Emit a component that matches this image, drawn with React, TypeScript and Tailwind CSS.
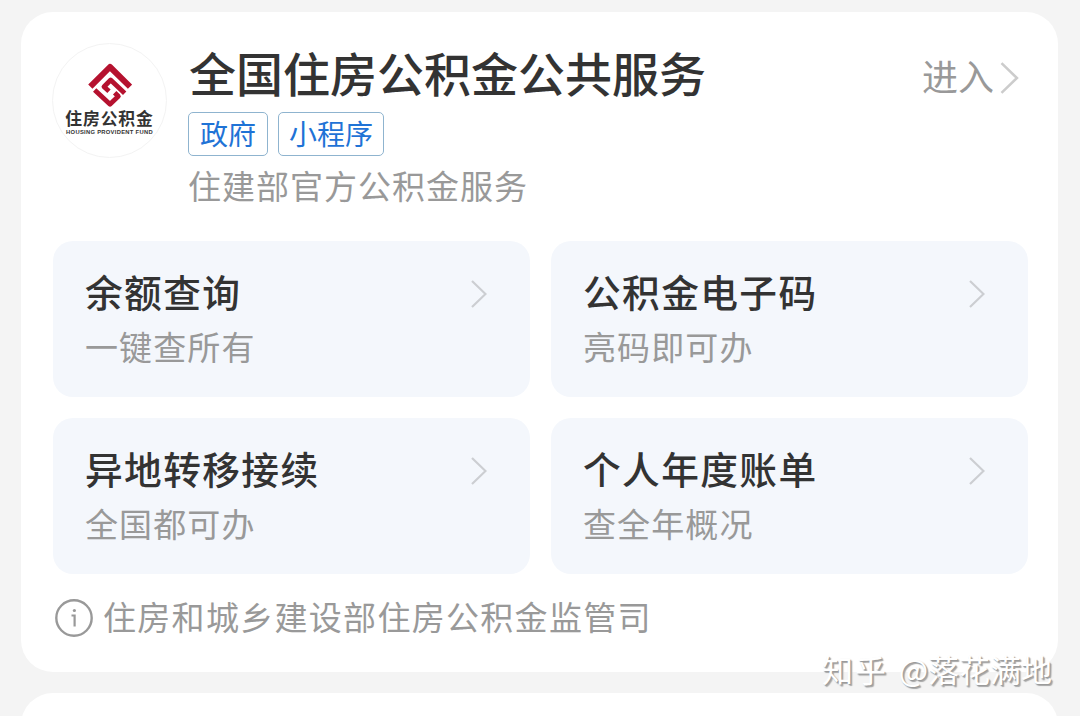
type Service = {
  title: string;
  desc: string;
};

const services: Service[] = [
  { title: "余额查询", desc: "一键查所有" },
  { title: "公积金电子码", desc: "亮码即可办" },
  { title: "异地转移接续", desc: "全国都可办" },
  { title: "个人年度账单", desc: "查全年概况" },
];

function Chevron({ className }: { className: string }) {
  return (
    <svg
      viewBox="0 0 16 28"
      fill="none"
      stroke="currentColor"
      className={className}
    >
      <path d="M1 1 L14.5 14 L1 27" strokeWidth="2.2" />
    </svg>
  );
}

function Logo() {
  return (
    <div className="-ml-px flex h-[115px] w-[115px] shrink-0 flex-col items-center rounded-full border border-[#f3f3f3] bg-white pt-[18px]">
      <svg
        viewBox="142 96 132 138"
        className="h-[46px] w-11"
        fill="none"
        stroke="#b5122f"
        strokeWidth="14.5"
        strokeLinejoin="round"
      >
        <path d="M149 170 L208 111 L268 170" strokeWidth="18" />
        <path d="M252 190 L210 150 L190 170 L205 184" />
        <path d="M162 180 L208 223 L233 199 L222 188" />
      </svg>
      <span className="mt-0.5 text-[16.8px] leading-[17px] font-bold tracking-[0.9px] whitespace-nowrap text-[#333]">
        住房公积金
      </span>
      <span className="mt-px font-['Liberation_Sans',sans-serif] text-[5.8px] leading-[9px] font-bold tracking-[0.3px] whitespace-nowrap text-[#333]">
        HOUSING PROVIDENT FUND
      </span>
    </div>
  );
}

function Tag({ label }: { label: string }) {
  return (
    <span className="flex h-11 min-w-20 items-center justify-center rounded-[5px] border border-[#8fb4cf] px-[10px] pb-0.5 text-[28px] leading-none text-[#1f73d6]">
      {label}
    </span>
  );
}

function ServiceTile({ title, desc }: Service) {
  return (
    <div className="flex h-[156px] items-start justify-between rounded-[20px] bg-[#f4f7fc] pt-[26px] pr-[43px] pl-8">
      <div>
        <h3 className="text-[37.7px] leading-[48px] font-medium tracking-[1.4px] text-[#333]">
          {title}
        </h3>
        <p className="mt-[9px] text-[33px] leading-[44px] tracking-[1.1px] text-[#999]">
          {desc}
        </p>
      </div>
      <Chevron className="mt-[13px] h-7 w-4 text-[#ccced2]" />
    </div>
  );
}

export default function App() {
  return (
    <div className="relative h-[716px] w-[1080px] overflow-hidden bg-[#f4f4f4] pt-3 pr-[22px] pl-[21px] font-['Noto_Sans_CJK_SC',sans-serif]">
      <section className="h-[660px] rounded-[32px] bg-white pt-[31px] pr-[30px] pl-8">
        <header className="flex h-[198px] items-start">
          <Logo />
          <div className="ml-[21px] flex-1">
            <h1 className="-mt-[3px] ml-px text-[47px] leading-[64px] font-medium text-[#333]">
              全国住房公积金公共服务
            </h1>
            <div className="mt-2 flex gap-[10px]">
              <Tag label="政府" />
              <Tag label="小程序" />
            </div>
            <p className="mt-[7px] text-[33px] leading-[44px] tracking-[1px] text-[#999]">
              住建部官方公积金服务
            </p>
          </div>
          <div className="mt-[13px] mr-[9px] flex items-center gap-[6px]">
            <span className="-mt-[5px] text-[36px] leading-[48px] text-[#999]">
              进入
            </span>
            <Chevron className="h-8 w-[19px] text-[#ccc]" />
          </div>
        </header>

        <div className="grid grid-cols-2 gap-x-[21px] gap-y-[21px]">
          {services.map((service) => (
            <ServiceTile key={service.title} {...service} />
          ))}
        </div>

        <footer className="mt-6 ml-[2px] flex items-center text-[#999]">
          <svg
            viewBox="0 0 38 38"
            className="h-[38px] w-[38px]"
            fill="none"
            stroke="currentColor"
          >
            <circle cx="19" cy="19" r="17.7" strokeWidth="2.4" />
            <path d="M16.5 16.5 H19.6 V27.5" strokeWidth="2.2" />
            <circle cx="19.4" cy="11.5" r="1.6" fill="currentColor" stroke="none" />
          </svg>
          <span className="-mt-1 ml-[10px] text-[33px] leading-[44px] tracking-[1.3px]">
            住房和城乡建设部住房公积金监管司
          </span>
        </footer>
      </section>

      {/* next card peeks in from below */}
      <section className="mt-[21px] h-20 rounded-[32px] bg-white" />

      <span className="absolute right-[28px] bottom-[25px] text-[31px] leading-[44px] whitespace-nowrap text-white [text-shadow:1px_1px_1px_#999,2px_2px_1px_#aaa] [word-spacing:4px]">
        <span className="tracking-[1.8px]">知乎</span> @落花满地
      </span>
    </div>
  );
}
